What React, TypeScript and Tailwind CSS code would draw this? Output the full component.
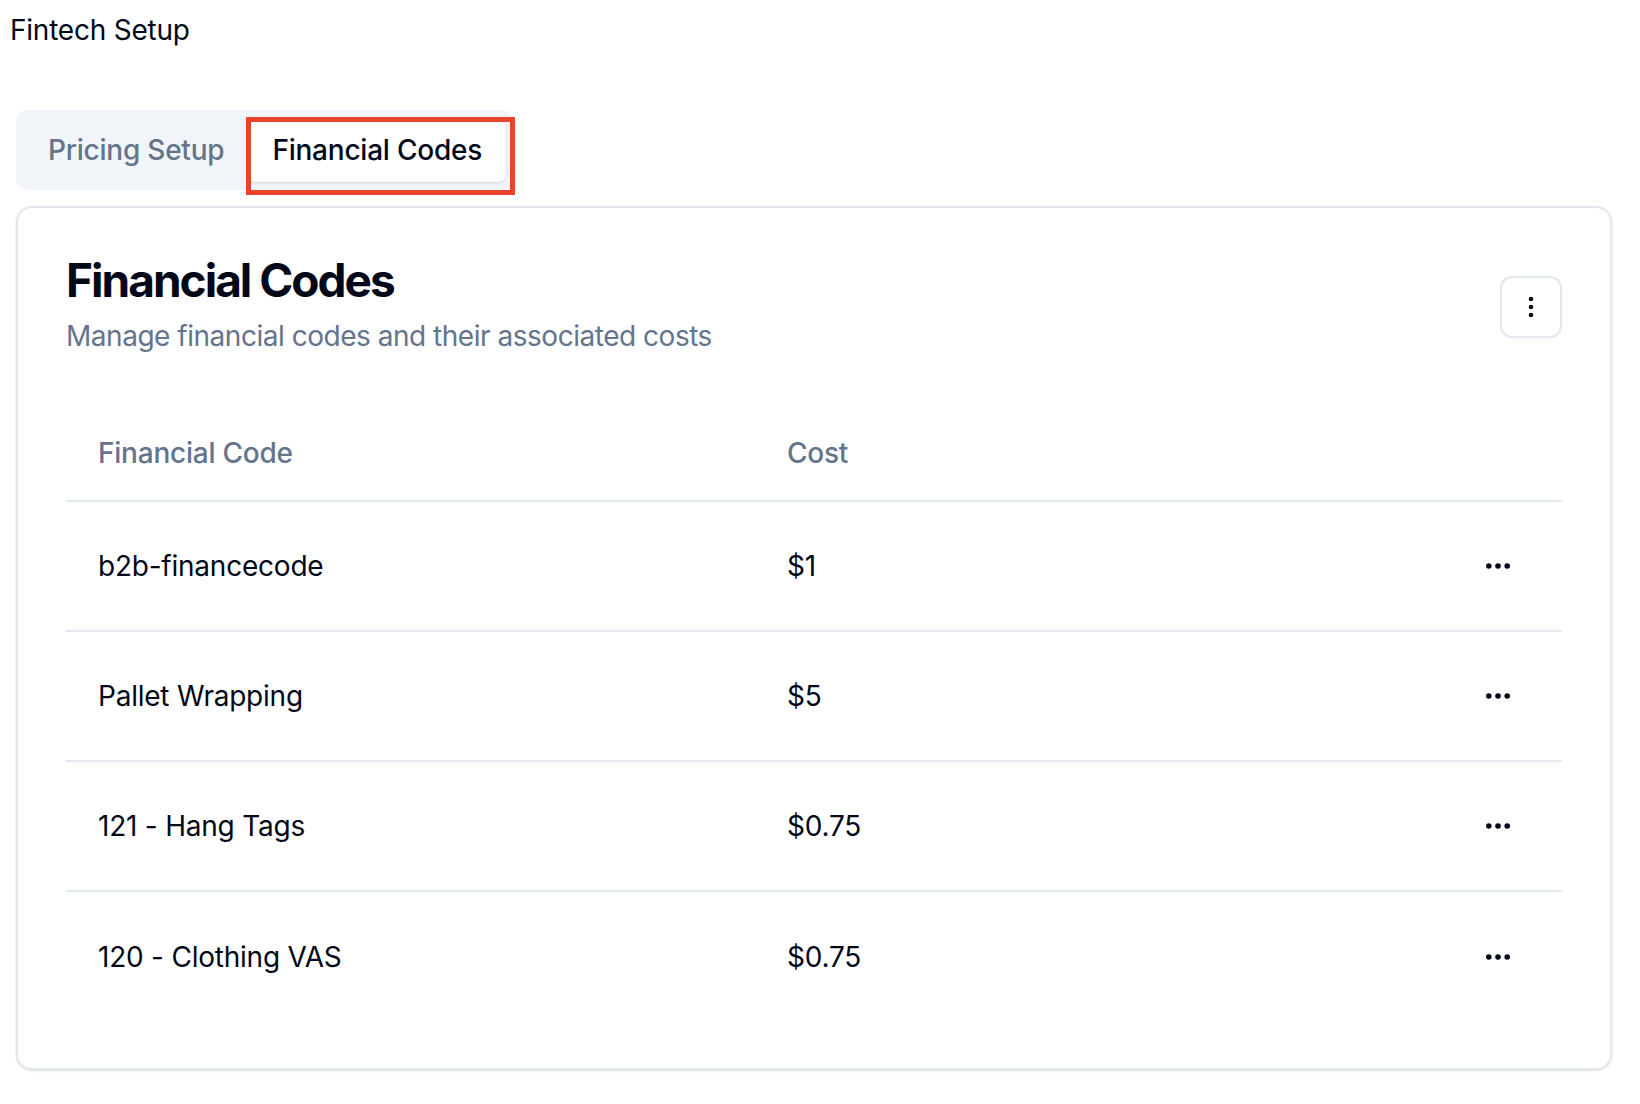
import React from "react";

const rows = [
  { code: "b2b-financecode", cost: "$1" },
  { code: "Pallet Wrapping", cost: "$5" },
  { code: "121 - Hang Tags", cost: "$0.75" },
  { code: "120 - Clothing VAS", cost: "$0.75" },
];

const DotsVertical = () => (
  <svg width="10" height="26" viewBox="0 0 10 26" fill="#020817">
    <circle cx="5" cy="5" r="2.3" />
    <circle cx="5" cy="13" r="2.3" />
    <circle cx="5" cy="21" r="2.3" />
  </svg>
);

const DotsHorizontal = () => (
  <svg width="28" height="10" viewBox="0 0 28 10" fill="#020817">
    <circle cx="4.8" cy="5" r="2.8" />
    <circle cx="14" cy="5" r="2.8" />
    <circle cx="23.2" cy="5" r="2.8" />
  </svg>
);

export default function App() {
  return (
    <div
      className="w-[1640px] h-[1104px] bg-white text-[#020817] tracking-[-0.014em]"
      style={{ fontFamily: "Inter, 'Noto Sans', sans-serif" }}
    >
      <div className="pl-[10px] pt-[10px] text-[28px] leading-[40px]">
        Fintech Setup
      </div>

      <div className="ml-[16px] mt-[60px] inline-flex h-[80px] items-center rounded-[12px] bg-[#f1f5f9] p-[8px]">
        <button className="h-[64px] rounded-[8px] px-[24px] text-[28px] font-medium text-[#64748b]">
          Pricing Setup
        </button>
        <div className="relative">
          <button className="h-[64px] rounded-[8px] bg-white px-[24px] text-[28px] font-medium text-[#020817] shadow-sm">
            Financial Codes
          </button>
          <div className="pointer-events-none absolute -left-[2px] -right-[9px] -top-[1px] -bottom-[13px] border-[5px] border-[#e9432a]" />
        </div>
      </div>

      <div className="ml-[16px] mt-[16px] w-[1596px] rounded-[16px] border-2 border-[#e2e8f0] bg-white shadow-sm">
        <div className="flex items-center justify-between px-[48px] pt-[49px] pb-[50px]">
          <div className="flex flex-col gap-[13px]">
            <h3 className="text-[46px] font-bold leading-none tracking-[-0.043em]">
              Financial Codes
            </h3>
            <p className="text-[28px] leading-[40px] tracking-[-0.017em] text-[#64748b]">
              Manage financial codes and their associated costs
            </p>
          </div>
          <button className="flex h-[62px] w-[62px] items-center justify-center rounded-[12px] border-2 border-[#e2e8f0] bg-white">
            <DotsVertical />
          </button>
        </div>

        <div className="px-[48px] pb-[46px]">
          <div className="grid h-[96px] grid-cols-[689px_1fr_128px] items-center border-b-2 border-[#e2e8f0] text-[28px] font-medium text-[#64748b]">
            <div className="px-[32px]">Financial Code</div>
            <div className="px-[32px]">Cost</div>
            <div />
          </div>
          {rows.map((row, i) => (
            <div
              key={row.code}
              className={`grid h-[130px] grid-cols-[689px_1fr_128px] items-center text-[28px] ${
                i < rows.length - 1 ? "border-b-2 border-[#e2e8f0]" : ""
              }`}
            >
              <div className="px-[32px]">{row.code}</div>
              <div className="px-[32px]">{row.cost}</div>
              <div className="flex justify-end px-[32px]">
                <button className="flex h-[64px] w-[64px] items-center justify-center rounded-[12px]">
                  <DotsHorizontal />
                </button>
              </div>
            </div>
          ))}
        </div>
      </div>
    </div>
  );
}
